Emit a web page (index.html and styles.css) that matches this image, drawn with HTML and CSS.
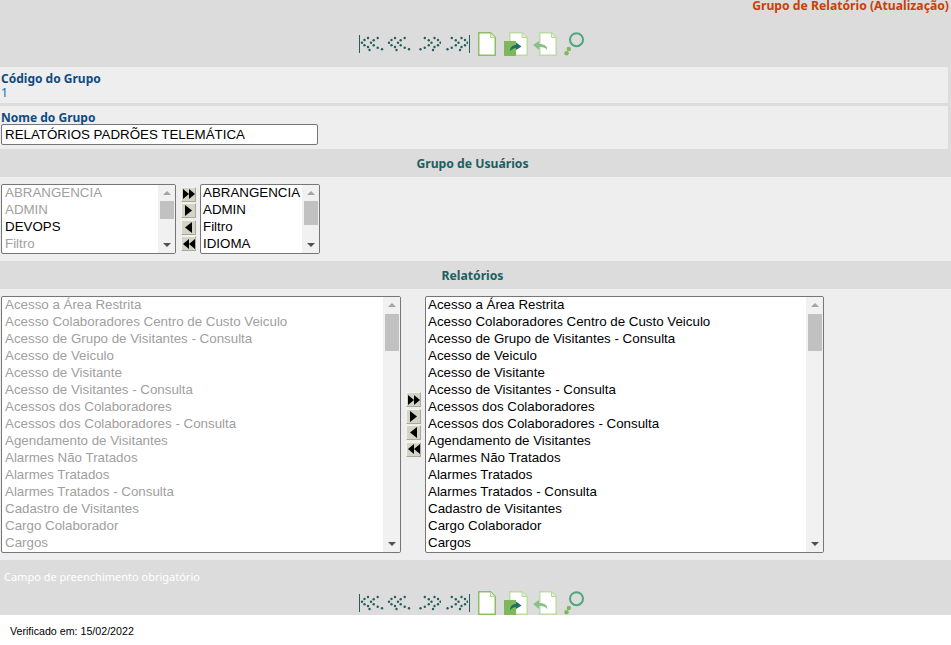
FILE: index.html
```html
<!DOCTYPE html>
<html lang="pt-BR">
  <head>
    <meta charset="utf-8" />
    <meta name="viewport" content="width=device-width, initial-scale=1" />
    <title>Grupo de Relatório</title>
    <link rel="stylesheet" href="styles.css">
  </head>
  <body>
    <svg class="defs" width="0" height="0">
      <defs>
        <g id="dots">
          <circle cx="2" cy="10.7" r="1.2"/><circle cx="4.5" cy="8" r="1.2"/><circle cx="8" cy="6" r="1.2"/><circle cx="4.5" cy="13.3" r="1.2"/><circle cx="8" cy="15" r="1.2"/>
          <circle cx="11" cy="10.7" r="1.2"/><circle cx="13.7" cy="8.3" r="1.2"/><circle cx="17.7" cy="6" r="1.2"/><circle cx="13.7" cy="13.3" r="1.2"/><circle cx="17.7" cy="15.7" r="1.2"/><circle cx="22" cy="17.3" r="1.2"/><circle cx="9.5" cy="18" r="1.2"/>
        </g>
        <symbol id="dots-left" viewBox="0 0 27 24">
          <use href="#dots" fill="#1f5f58"/>
        </symbol>
        <symbol id="dots-right" viewBox="0 0 27 24">
          <use href="#dots" fill="#1f5f58" transform="translate(28.5 0) scale(-1 1)"/>
        </symbol>
        <symbol id="page" viewBox="0 0 18 24">
          <path d="M.75.75H12.5L17.25 5.5V23.25H.75Z" fill="#fff" stroke="#8cbf5f" stroke-width="1.5"/>
          <path d="M12.5 1V5.5H17" fill="#e2eed6" stroke="#b5d698"/>
        </symbol>
        <symbol id="open" viewBox="0 0 24 24">
          <path d="M5.75.75H18L23.25 5.5V23.25H5.75Z" fill="#fff" stroke="#bcdca4" stroke-width="1.5"/>
          <path d="M18 1V5.5H23" fill="#e2eed6" stroke="#b5d698"/>
          <path d="M0 9H12V24H0Z" fill="#7fb85a"/>
          <path d="M6 19C6 15 9 13 12 13V10.5L17.5 14.5L12 18V16C10 16 8 17 6 19Z" fill="#1f6f62"/>
        </symbol>
        <symbol id="back" viewBox="0 0 24 24">
          <path d="M6.75.75H18.5L23.25 5.5V23.25H6.75Z" fill="#fff" stroke="#bcdca4" stroke-width="1.5"/>
          <path d="M18.5 1V5.5H23" fill="#e2eed6" stroke="#b5d698"/>
          <path d="M14 19C14 16 11 15 6 15V18L0 13L6 9V12C12 12 15 14 14 19Z" fill="#8cc08a"/>
        </symbol>
        <symbol id="lens" viewBox="0 0 22 24">
          <circle cx="12.5" cy="7.7" r="6.5" fill="none" stroke="#4fa67a" stroke-width="2"/>
          <circle cx="4.8" cy="17" r="2.2" fill="#7fb85a"/>
          <circle cx="2.5" cy="21.2" r="2.2" fill="#7fb85a"/>
        </symbol>
        <symbol id="tri-r" viewBox="0 0 6 10" preserveAspectRatio="none"><path d="M0 0L6 5L0 10Z"/></symbol>
        <symbol id="tri-l" viewBox="0 0 6 10" preserveAspectRatio="none"><path d="M6 0L0 5L6 10Z"/></symbol>
      </defs>
    </svg>

    <div class="page">
      <div class="title">Grupo de Relatório (Atualização)</div>
      <div class="toolbar toolbar-top">
        <span class="nav-bar"></span>
        <svg class="ico-nav"><use href="#dots-left"/></svg>
        <svg class="ico-nav"><use href="#dots-left"/></svg>
        <svg class="ico-nav"><use href="#dots-right"/></svg>
        <svg class="ico-nav"><use href="#dots-right"/></svg>
        <span class="nav-bar nav-end"></span>
        <svg class="ico-page"><use href="#page"/></svg>
        <svg class="ico-wide"><use href="#open"/></svg>
        <svg class="ico-wide"><use href="#back"/></svg>
        <svg class="ico-lens"><use href="#lens"/></svg>
      </div>

      <div class="row row-code">
        <div class="label">Código do Grupo</div>
        <div class="value">1</div>
      </div>
      <div class="row row-name">
        <div class="label">Nome do Grupo</div>
        <input class="name-input" type="text" value="RELATÓRIOS PADRÕES TELEMÁTICA" />
      </div>

      <div class="section">Grupo de Usuários</div>
      <div class="picker picker-small">
        <div class="list list-a">
          <div class="items items-left">
            <div class="off">ABRANGENCIA</div>
            <div class="off">ADMIN</div>
            <div>DEVOPS</div>
            <div class="off">Filtro</div>
          </div>
          <div class="scroll"><i class="up"></i><b class="thumb thumb-a"></b><i class="down"></i></div>
        </div>
        <div class="moves">
          <span class="move"><svg><use href="#tri-r"/></svg><svg><use href="#tri-r"/></svg></span>
          <span class="move"><svg class="one"><use href="#tri-r"/></svg></span>
          <span class="move"><svg class="one"><use href="#tri-l"/></svg></span>
          <span class="move"><svg><use href="#tri-l"/></svg><svg><use href="#tri-l"/></svg></span>
        </div>
        <div class="list list-b">
          <div class="items">
            <div>ABRANGENCIA</div>
            <div>ADMIN</div>
            <div>Filtro</div>
            <div>IDIOMA</div>
          </div>
          <div class="scroll"><i class="up"></i><b class="thumb thumb-b"></b><i class="down"></i></div>
        </div>
      </div>

      <div class="section">Relatórios</div>
      <div class="picker picker-big">
        <div class="list list-c">
          <div class="items items-left off">
            <div>Acesso a Área Restrita</div>
            <div>Acesso Colaboradores Centro de Custo Veiculo</div>
            <div>Acesso de Grupo de Visitantes - Consulta</div>
            <div>Acesso de Veiculo</div>
            <div>Acesso de Visitante</div>
            <div>Acesso de Visitantes - Consulta</div>
            <div>Acessos dos Colaboradores</div>
            <div>Acessos dos Colaboradores - Consulta</div>
            <div>Agendamento de Visitantes</div>
            <div>Alarmes Não Tratados</div>
            <div>Alarmes Tratados</div>
            <div>Alarmes Tratados - Consulta</div>
            <div>Cadastro de Visitantes</div>
            <div>Cargo Colaborador</div>
            <div>Cargos</div>
          </div>
          <div class="scroll"><i class="up"></i><b class="thumb thumb-c"></b><i class="down"></i></div>
        </div>
        <div class="moves">
          <span class="move"><svg><use href="#tri-r"/></svg><svg><use href="#tri-r"/></svg></span>
          <span class="move"><svg class="one"><use href="#tri-r"/></svg></span>
          <span class="move"><svg class="one"><use href="#tri-l"/></svg></span>
          <span class="move"><svg><use href="#tri-l"/></svg><svg><use href="#tri-l"/></svg></span>
        </div>
        <div class="list list-d">
          <div class="items">
            <div>Acesso a Área Restrita</div>
            <div>Acesso Colaboradores Centro de Custo Veiculo</div>
            <div>Acesso de Grupo de Visitantes - Consulta</div>
            <div>Acesso de Veiculo</div>
            <div>Acesso de Visitante</div>
            <div>Acesso de Visitantes - Consulta</div>
            <div>Acessos dos Colaboradores</div>
            <div>Acessos dos Colaboradores - Consulta</div>
            <div>Agendamento de Visitantes</div>
            <div>Alarmes Não Tratados</div>
            <div>Alarmes Tratados</div>
            <div>Alarmes Tratados - Consulta</div>
            <div>Cadastro de Visitantes</div>
            <div>Cargo Colaborador</div>
            <div>Cargos</div>
          </div>
          <div class="scroll"><i class="up"></i><b class="thumb thumb-c"></b><i class="down"></i></div>
        </div>
      </div>

      <div class="foot">
        <div class="required">Campo de preenchimento obrigatório</div>
        <div class="toolbar">
          <span class="nav-bar"></span>
          <svg class="ico-nav"><use href="#dots-left"/></svg>
          <svg class="ico-nav"><use href="#dots-left"/></svg>
          <svg class="ico-nav"><use href="#dots-right"/></svg>
          <svg class="ico-nav"><use href="#dots-right"/></svg>
          <span class="nav-bar nav-end"></span>
          <svg class="ico-page"><use href="#page"/></svg>
          <svg class="ico-wide"><use href="#open"/></svg>
          <svg class="ico-wide"><use href="#back"/></svg>
          <svg class="ico-lens"><use href="#lens"/></svg>
        </div>
      </div>
    </div>
    <div class="checked">Verificado em: 15/02/2022</div>
  </body>
</html>
```

FILE: styles.css
```css
body {
  margin: 0;
  background-color: #fff;
  font-family: "Liberation Sans", Arial, sans-serif;
}

.defs {
  display: block;
  height: 0;
}

.page {
  background-color: #dcdcdc;
}

.title {
  height: 12px;
  padding-right: 2px;
  text-align: right;
  font: bold 12.2px/12px "Noto Sans", Tahoma, sans-serif;
  color: #c8400a;
}

.toolbar {
  display: flex;
  align-items: center;
  padding-left: 359px;
  height: 24px;
}

.toolbar-top {
  margin: 20px 0 11px;
}

.nav-bar {
  width: 1px;
  height: 18px;
  background-color: #1f5f58;
}

.nav-end {
  margin-left: 1px;
}

.ico-nav {
  width: 27px;
  height: 24px;
}

.ico-page {
  width: 18px;
  height: 24px;
  margin-left: 8px;
  margin-right: 8px;
}

.ico-wide {
  width: 24px;
  height: 24px;
  margin-right: 5px;
}

.ico-lens {
  width: 22px;
  height: 24px;
  margin-left: 2px;
}

.row {
  width: 948px;
  background-color: #eee;
}

.row-code {
  height: 36px;
  margin-bottom: 3px;
  padding-top: 5px;
  box-sizing: border-box;
}

.row-name {
  height: 43px;
  padding-top: 5px;
  box-sizing: border-box;
}

.label {
  padding-left: 1px;
  font: bold 12px/13px "Noto Sans", Tahoma, sans-serif;
  color: #0f4a80;
}

.value {
  margin-top: 1px;
  padding-left: 1px;
  font: 12px/14px "Noto Sans", Tahoma, sans-serif;
  color: #0070b8;
}

.name-input {
  display: block;
  box-sizing: border-box;
  width: 317px;
  height: 21px;
  margin: 0 0 0 1px;
  padding: 0 3px 1px;
  border: 1px solid #767676;
  border-radius: 2px;
  background-color: #fff;
  font: 13.33px "Liberation Sans", Arial, sans-serif;
  color: #000;
}

.section {
  height: 28px;
  padding-right: 6px;
  text-align: center;
  font: bold 12.2px/29px "Noto Sans", Tahoma, sans-serif;
  color: #1a6060;
}

.picker {
  display: flex;
  align-items: center;
  background-color: #eee;
  padding-left: 1px;
}

.picker-small {
  height: 84px;
  gap: 5px;
}

.picker-big {
  height: 271px;
  gap: 5px;
}

.list {
  display: flex;
  box-sizing: border-box;
  border: 1px solid #767676;
  border-radius: 2px;
  background-color: #fff;
  overflow: hidden;
}

.list-a {
  width: 175px;
  height: 70px;
}

.list-b {
  width: 120px;
  height: 70px;
  margin-left: -1px;
}

.list-c {
  width: 400px;
  height: 257px;
}

.list-d {
  width: 399px;
  height: 257px;
  margin-left: -1px;
}

.items {
  flex: 1;
  min-width: 0;
  white-space: nowrap;
  margin-top: -1px;
  padding-left: 2px;
  font-size: 13.33px;
  line-height: 17px;
  color: #000;
  overflow: hidden;
}

.items-left {
  padding-left: 3px;
}

.items.off,
.off {
  color: #a0a0a0;
}

.scroll {
  position: relative;
  flex: none;
  width: 17px;
  background-color: #f1f1f1;
}

.thumb {
  position: absolute;
  left: 2px;
  right: 1px;
  background-color: #c1c1c1;
}

.thumb-a {
  top: 16px;
  height: 18px;
}

.thumb-b {
  top: 16px;
  height: 24px;
}

.thumb-c {
  top: 17px;
  height: 37px;
}

.up,
.down {
  position: absolute;
  left: 5px;
  width: 0;
  height: 0;
  border-left: 4px solid transparent;
  border-right: 4px solid transparent;
}

.up {
  top: 6px;
  border-bottom: 4px solid #a3a3a3;
}

.down {
  bottom: 6px;
  border-top: 4px solid #505050;
}

.moves {
  display: flex;
  flex-direction: column;
  gap: 1.5px;
}

.move {
  display: flex;
  justify-content: center;
  align-items: center;
  width: 15px;
  height: 15px;
  background-color: #d4d4c4;
  border-top: 1px solid #f4f4ee;
  border-left: 1px solid #f4f4ee;
  border-right: 1px solid #a8a89c;
  border-bottom: 1px solid #a8a89c;
  box-sizing: border-box;
}

.move svg {
  width: 6px;
  height: 10px;
  fill: #000;
}

.move svg.one {
  width: 7px;
  height: 11px;
}

.foot {
  height: 55px;
}

.required {
  height: 31px;
  padding-left: 4px;
  font: 11px/34px "Noto Sans", Tahoma, sans-serif;
  color: #fff;
}

.checked {
  padding: 10px 0 0 10px;
  font-size: 10.67px;
  line-height: 13px;
  color: #000;
}
```
